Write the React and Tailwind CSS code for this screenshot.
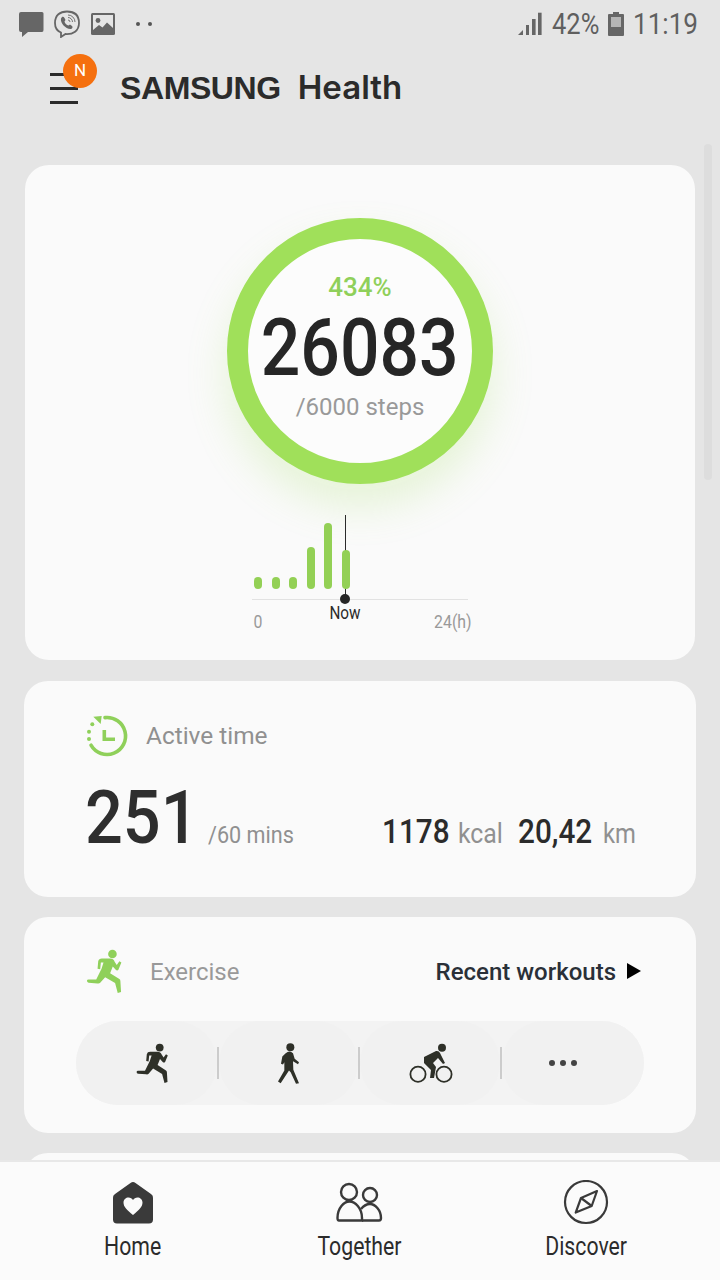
import React from 'react';

const bars = [12, 12, 12, 42, 66, 39];

const RunnerIcon = ({ className }) => (
  <svg viewBox="78 55 110 136" className={className} fill="currentColor">
    <circle cx="157" cy="70" r="13" />
    <path d="M112 115 L114 92 Q116 84 125 84 L150 84 Q160 84 164 94 L170 103 L178 92 L184 96 L175 118 Q171 122 167 118 L158 108 L150 128 L178 146 Q181 148 181 152 L183 185 L173 188 L165 158 L135 140 L120 157 Q117 160 112 159 L85 157 Q80 156 80 151 Q80 147 85 147 L108 147 L124 115 L130 96 L122 96 L120 116 Z" />
  </svg>
);

const WalkerIcon = ({ className }) => (
  <svg viewBox="650 335 72 128" className={className} fill="currentColor">
    <circle cx="690" cy="350" r="12" />
    <path d="M676 368 Q688 358 698 368 L703 385 L716 395 L713 401 L698 392 L699 418 L716 458 L707 460 L691 425 L686 420 L661 458 L653 453 L672 420 L672 395 L668 402 L662 400 L666 378 Z" />
  </svg>
);

const BikeIcon = ({ className }) => (
  <svg viewBox="0 0 46 42" className={className}>
    <circle cx="10" cy="32.3" r="7.6" fill="none" stroke="currentColor" strokeWidth="1.8" />
    <circle cx="36" cy="32.3" r="7.6" fill="none" stroke="currentColor" strokeWidth="1.8" />
    <circle cx="34" cy="5.7" r="4" fill="currentColor" />
    <path fill="currentColor" d="M16 15 L28 9 Q31 8.5 32 11 L37 21 L35 22 L30 16 L25 21 L28 25 L26 36 L22 36 L23 28 L16 21 Z" />
  </svg>
);

const ClockIcon = () => (
  <svg viewBox="0 0 44 44" className="w-11 h-11 text-[#8fd05a]">
    <path d="M20 3.6 A18.5 18.5 0 1 1 6 31.2" fill="none" stroke="currentColor" strokeWidth="3.6" strokeLinecap="round" />
    <path d="M8.3 2.7 L16.7 2 L15.7 10 Z" fill="currentColor" />
    <circle cx="7.3" cy="10.3" r="2" fill="currentColor" />
    <circle cx="4" cy="17.7" r="2" fill="currentColor" />
    <circle cx="4" cy="25" r="2" fill="currentColor" />
    <path d="M19.3 16 V25.3 H30" fill="none" stroke="currentColor" strokeWidth="3.6" />
  </svg>
);

const StatusIcons = () => (
  <div className="flex items-center">
    <svg viewBox="0 0 26 26" className="w-[26px] h-[26px] ml-[18px] text-[#666]" fill="currentColor">
      <path d="M3 1 H24 Q25.5 1 25.5 2.5 V19 Q25.5 21 24 21 H10 L4 26 V21 H3 Q1 21 1 19 V3 Q1 1 3 1 Z" />
    </svg>
    <svg viewBox="0 0 28 28" className="w-7 h-7 ml-[9px] text-[#666]">
      <path d="M14 1.5 C7 1.5 2 5 2 13 C2 18 4 21 8 22.5 V27 L12.5 24 C20 24.5 26 21 26 13 C26 5 21 1.5 14 1.5 Z" fill="none" stroke="currentColor" strokeWidth="1.8" />
      <path d="M9 7 C10 6.5 11 7 11.5 8 L12.5 10 L11.5 11.5 C12 13.5 13.5 15 15.5 15.5 L17 14.5 L19 16 C20 17 19.5 18.5 18 19 C13 19.5 7 13 8 8.5 Z" fill="currentColor" />
      <path d="M15 5 a7 7 0 0 1 7 7 M15 7.5 a4.5 4.5 0 0 1 4.5 4.5 M15 10 a2 2 0 0 1 2 2" fill="none" stroke="currentColor" strokeWidth="0.9" />
    </svg>
    <svg viewBox="0 0 24 22" className="w-6 h-[22px] ml-[10px]">
      <rect width="24" height="22" rx="1.5" fill="#666" />
      <rect x="2" y="2" width="20" height="18" fill="#e5e5e5" />
      <circle cx="7" cy="7.5" r="2.4" fill="#666" />
      <path d="M2 20 V17 L8 12 L11.5 14.5 L16 9.5 L22 15 V20 Z" fill="#666" />
    </svg>
    <div className="flex gap-2 ml-[21px]">
      <span className="w-1 h-1 rounded-full bg-[#555]" />
      <span className="w-1 h-1 rounded-full bg-[#555]" />
    </div>
  </div>
);

const StatusRight = () => (
  <div className="flex items-center text-[30px] leading-none text-[#5f5f5f]">
    <svg viewBox="0 0 26 26" className="w-[26px] h-[26px] text-[#666]" fill="currentColor">
      <path d="M1 24 L6 19 V24 Z" />
      <rect x="9" y="14" width="3" height="10" />
      <rect x="15" y="8" width="3.6" height="16" />
      <rect x="21" y="1.7" width="3.6" height="22.3" />
    </svg>
    <span className="w-[56px] ml-[9px] inline-block origin-left scale-x-[0.85] whitespace-nowrap">42%</span>
    <svg viewBox="0 0 16 24" className="w-4 h-6">
      <path d="M5 0 H11 V2 H15 Q16 2 16 3 V23 Q16 24 15 24 H1 Q0 24 0 23 V3 Q0 2 1 2 H5 Z" fill="#666" />
      <rect x="3" y="5" width="10" height="10" fill="#b5b5b5" />
    </svg>
    <span className="w-[65px] ml-[9px] inline-block origin-left scale-x-[0.87] whitespace-nowrap">11:19</span>
  </div>
);

const NavHome = () => (
  <svg viewBox="0 0 48 48" className="w-12 h-12">
    <path fill="#3a3a3a" d="M21.5 3 a4 4 0 0 1 5 0 L42 14 a4 4 0 0 1 2 4 V39.5 a4 4 0 0 1 -4 4 H8 a4 4 0 0 1 -4 -4 V18 a4 4 0 0 1 2 -4 Z" />
    <path fill="#fbfbfb" transform="translate(0 -3)" d="M24 38 C18 33 14.5 30 14.5 25.5 C14.5 22.5 17 20.5 19.5 20.5 C21.5 20.5 23 21.5 24 23 C25 21.5 26.5 20.5 28.5 20.5 C31 20.5 33.5 22.5 33.5 25.5 C33.5 30 30 33 24 38 Z" />
  </svg>
);

const NavTogether = () => (
  <svg viewBox="0 0 48 48" className="w-12 h-12 -translate-x-px" fill="none" stroke="#3a3a3a" strokeWidth="2.4">
    <circle cx="14" cy="12" r="8" />
    <circle cx="35" cy="15" r="7" />
    <path d="M4 40.5 Q2.5 40.5 2.5 38 C2.5 28 9 21.5 14.5 21.5 C20 21.5 27 28 27 38 V40.5 Z" />
    <path d="M27 40.5 H44 Q46 40.5 46 38 C46 30 40 24 35 24 C31.5 24 28.5 26 26 29" />
  </svg>
);

const NavDiscover = () => (
  <svg viewBox="0 0 48 48" className="w-12 h-12" fill="none" stroke="#3a3a3a" strokeWidth="2.2" strokeLinejoin="round">
    <circle cx="24" cy="22" r="21" />
    <path d="M35 11 L19 18 L13.7 32.6 L29.7 26 Z" />
    <path d="M19 18 L29.7 26" />
  </svg>
);

const NavItem = ({ icon, label }) => (
  <div className="w-[160px] flex flex-col items-center">
    {icon}
    <span className="mt-[3px] text-[25px] leading-[32px] text-[#2b2b2b] scale-x-[0.85] whitespace-nowrap">{label}</span>
  </div>
);

export default function App() {
  return (
    <div className="w-[720px] h-[1280px] relative flex flex-col overflow-hidden bg-[#e5e5e5] font-['Roboto',sans-serif]">
      <div className="flex-1 min-h-0 overflow-hidden">
        <div className="h-[48px] pr-[22px] flex items-center justify-between">
          <StatusIcons />
          <StatusRight />
        </div>

        <div className="h-[80px] pl-[50px] flex items-center">
          <div className="relative w-[28px] flex flex-col gap-[11px]">
            <span className="h-[3px] bg-[#2b2b2b]" />
            <span className="h-[3px] bg-[#2b2b2b]" />
            <span className="h-[3px] bg-[#2b2b2b]" />
            <span className="absolute -top-[19px] left-[13px] w-[34px] h-[34px] rounded-full bg-[#f5700f] text-white text-[17px] flex items-center justify-center">N</span>
          </div>
          <span className="ml-[42px] font-['Liberation_Sans',sans-serif] font-bold text-[32px] tracking-[-0.4px] text-[#2b2b2b]">SAMSUNG</span>
          <span className="ml-[17px] font-['Inter',sans-serif] font-semibold text-[33px] text-[#2b2b2b]">Health</span>
        </div>

        <div className="mt-[37px] px-6 flex flex-col gap-5">
          <section className="mx-px mb-px h-[495px] rounded-[24px] bg-[#fafafa] pt-[53px]">
            <div className="mx-auto w-[266px] h-[266px] rounded-full border-[21px] border-[#a0e05a] bg-[#fcfcfc] shadow-[0_22px_40px_rgba(160,224,90,0.22)] flex flex-col items-center">
              <span className="mt-[34px] text-[26px] leading-[28px] font-medium text-[#8fd05a]">434%</span>
              <span className="mt-[17px] text-[80px] leading-[60px] font-medium text-[#262626] scale-x-[0.87]">26083</span>
              <span className="mt-[13px] text-[24px] leading-[32px] text-[#999]">/6000 steps</span>
            </div>

            <div className="relative ml-[227px] mt-[31px] w-[220px] h-[116px]">
              <span className="absolute left-[93px] top-0 w-px h-[84px] bg-[#2b2b2b]" />
              <div className="relative h-[74px] pl-[2px] flex items-end gap-[9.5px]">
                {bars.map((h, i) => (
                  <span key={i} className="w-2 rounded-full bg-[#93d055]" style={{ height: h }} />
                ))}
              </div>
              <div className="mt-[10px] w-[216px] h-px bg-[#e2e2e2]" />
              <div className="mt-[12px] flex justify-between text-[18px] leading-5 text-[#999]">
                <span className="ml-px scale-x-[0.88]">0</span>
                <span className="scale-x-[0.88] origin-right">24(h)</span>
              </div>
              <span className="absolute left-[88px] top-[79px] w-[10px] h-[10px] rounded-full bg-[#262626]" />
              <span className="absolute left-[73px] top-[88px] w-[40px] text-center text-[18px] leading-5 text-[#2b2b2b] scale-x-[0.85]">Now</span>
            </div>
          </section>

          <section className="h-[216px] rounded-[24px] bg-[#fafafa] pt-[33px] pl-[61px]">
            <div className="flex items-center h-11">
              <ClockIcon />
              <span className="ml-[17px] pt-px text-[24.4px] text-[#909090]">Active time</span>
            </div>
            <div className="mt-[16px] flex items-baseline">
              <span className="w-[123px] text-[74px] leading-[88px] font-medium text-[#2e2e2e] scale-x-[0.9] origin-left">251</span>
              <span className="w-[174px] text-[24px] text-[#909090] origin-left scale-x-[0.9] whitespace-nowrap">/60 mins</span>
              <span className="w-[76px] text-[33px] font-medium text-[#2b2b2b] origin-left scale-x-[0.9]">1178</span>
              <span className="w-[60px] text-[27px] text-[#909090] origin-left scale-x-[0.92]">kcal</span>
              <span className="w-[85px] text-[33px] font-medium text-[#2b2b2b] origin-left scale-x-[0.9] whitespace-nowrap">20,42</span>
              <span className="text-[27px] text-[#909090] origin-left scale-x-[0.88]">km</span>
            </div>
          </section>

          <section className="h-[216px] rounded-[24px] bg-[#fafafa] pt-[31px]">
            <div className="h-[46px] pl-[62px] pr-[55px] flex items-center">
              <RunnerIcon className="w-[37px] h-[45px] text-[#8fd05a]" />
              <span className="ml-[27px] pt-px text-[24px] text-[#999]">Exercise</span>
              <span className="ml-auto pt-px text-[24px] font-medium text-[#2a3038]">Recent workouts</span>
              <span className="ml-[11px] w-0 h-0 border-y-[8px] border-y-transparent border-l-[14px] border-l-black" />
            </div>
            <div className="mt-[27px] mx-[52px] h-[84px] rounded-full bg-[#f3f3f3] flex items-center">
              <div className="h-full w-[141px] pl-[12px] rounded-full bg-[#f1f1f1] flex items-center justify-center text-[#2e3028]">
                <RunnerIcon className="w-[33px] h-[41px]" />
              </div>
              <span className="w-[2px] h-8 bg-[#cccccc]" />
              <div className="h-full w-[139px] rounded-full bg-[#f1f1f1] flex items-center justify-center text-[#2e3028]">
                <WalkerIcon className="w-6 h-[43px]" />
              </div>
              <span className="w-[2px] h-8 bg-[#cccccc]" />
              <div className="h-full w-[140px] pl-[2px] rounded-full bg-[#f1f1f1] flex items-center justify-center text-[#2e3028]">
                <BikeIcon className="w-[46px] h-[42px]" />
              </div>
              <span className="w-[2px] h-8 bg-[#cccccc]" />
              <div className="h-full flex-1 pr-[20px] rounded-full bg-[#f1f1f1] flex items-center justify-center gap-[5px]">
                <span className="w-[6px] h-[6px] rounded-full bg-[#444]" />
                <span className="w-[6px] h-[6px] rounded-full bg-[#444]" />
                <span className="w-[6px] h-[6px] rounded-full bg-[#444]" />
              </div>
            </div>
          </section>

          <section className="h-[216px] rounded-[24px] bg-[#fafafa]" />
        </div>
      </div>

      <nav className="h-[120px] shrink-0 border-t-2 border-[#e8e8e8] bg-[#fbfbfb] pt-[18px] pl-[53px] pr-[54px] flex justify-between">
        <NavItem icon={<NavHome />} label="Home" />
        <NavItem icon={<NavTogether />} label="Together" />
        <NavItem icon={<NavDiscover />} label="Discover" />
      </nav>

      <span className="absolute left-[704px] top-[144px] w-[8px] h-[336px] rounded-full bg-[#dddddd]" />
    </div>
  );
}
